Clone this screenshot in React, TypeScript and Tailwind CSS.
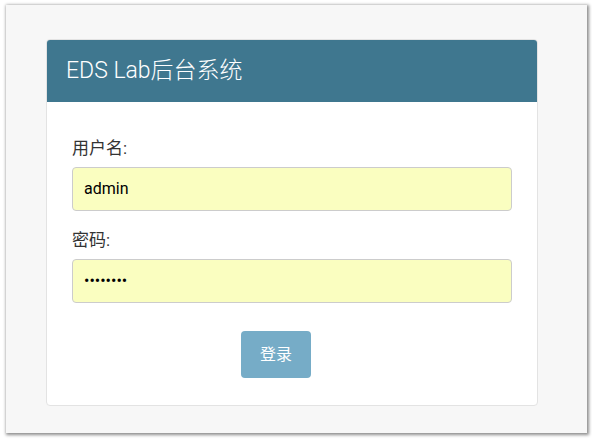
export default function App() {
  const font = { fontFamily: 'Roboto, "Noto Sans CJK SC", sans-serif' };
  return (
    <div className="w-[592px] h-[439px] bg-white pt-[5px] pl-[6px]" style={font}>
      <div className="w-[581px] h-[428px] bg-[#f7f7f7] shadow-[1px_1px_3px_1px_rgba(0,0,0,0.45)] pt-[34px] pl-[40px]">
        <div className="w-[492px] h-[367px] bg-white border border-[#e3e3e3] rounded-[4px] overflow-hidden flex flex-col">
          <div className="h-[63px] bg-[#3f778f] flex items-center px-[20px] -mx-px -mt-px">
            <span className="text-white text-[23px] font-light leading-none">EDS Lab后台系统</span>
          </div>
          <div className="px-[25px] pt-[34px] flex flex-col">
            <label className="text-[17px] leading-[24px] text-[#333]">用户名:</label>
            <div className="mt-[7px] h-[44px] bg-[#fafec0] border border-[#cccccc] rounded-[4px] flex items-center px-[11px] text-[16px] text-black">
              admin
            </div>
            <label className="mt-[17px] text-[17px] leading-[24px] text-[#333]">密码:</label>
            <div className="mt-[7px] h-[44px] bg-[#fafec0] border border-[#cccccc] rounded-[4px] flex items-center px-[11px] text-[16px] text-black">
              ••••••••
            </div>
            <div className="flex mt-[28px] pl-[169px]">
              <button className="w-[70px] h-[47px] bg-[#76acc7] rounded-[4px] text-white text-[16px]">
                登录
              </button>
            </div>
          </div>
        </div>
      </div>
    </div>
  );
}
